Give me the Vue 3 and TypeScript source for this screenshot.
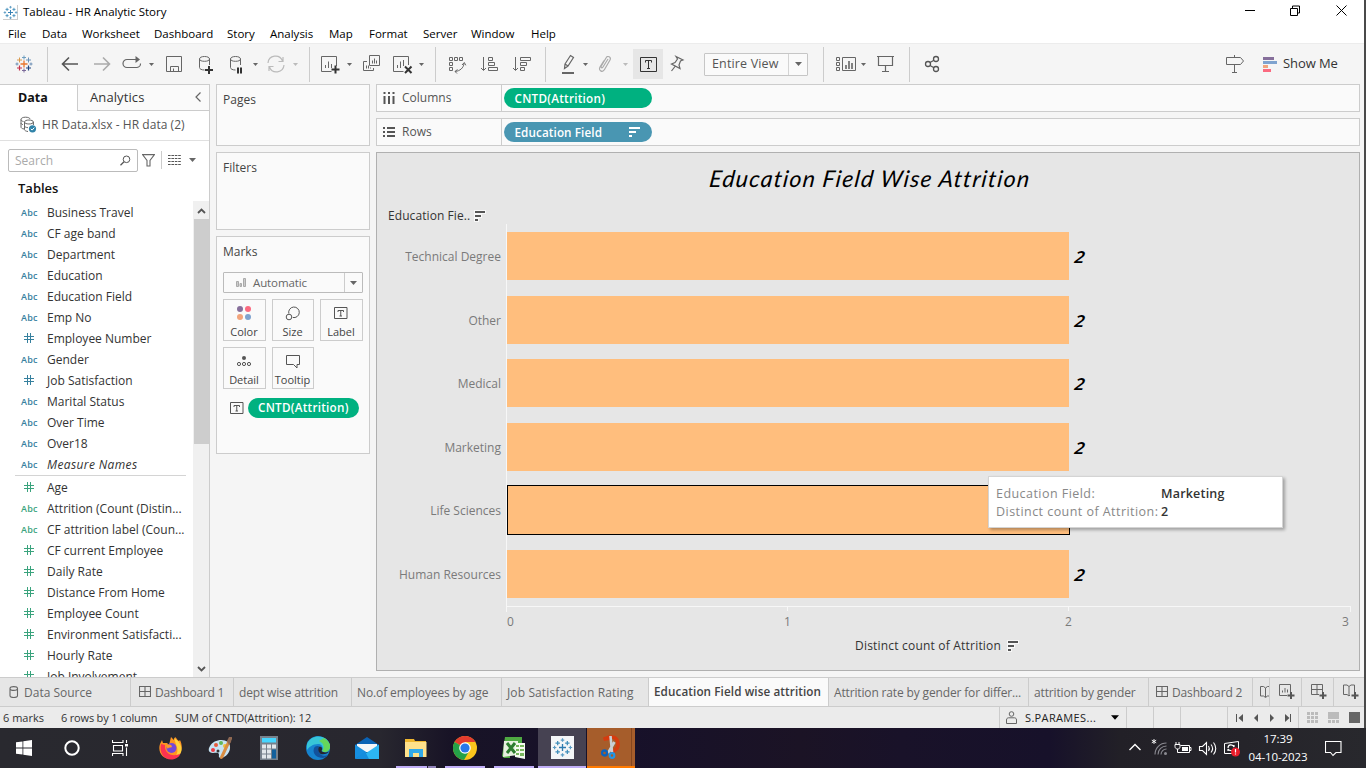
<script setup lang="ts">
interface Field { kind: 'abc' | 'num'; name: string; italic?: boolean }
interface Bar { name: string; value: number; selected?: boolean }
interface Tab { id: string; label: string; icon?: string; active?: boolean }

const menus: string[] = ['File', 'Data', 'Worksheet', 'Dashboard', 'Story', 'Analysis', 'Map', 'Format', 'Server', 'Window', 'Help']

const dimensions: Field[] = [
  { kind: 'abc', name: 'Business Travel' },
  { kind: 'abc', name: 'CF age band' },
  { kind: 'abc', name: 'Department' },
  { kind: 'abc', name: 'Education' },
  { kind: 'abc', name: 'Education Field' },
  { kind: 'abc', name: 'Emp No' },
  { kind: 'num', name: 'Employee Number' },
  { kind: 'abc', name: 'Gender' },
  { kind: 'num', name: 'Job Satisfaction' },
  { kind: 'abc', name: 'Marital Status' },
  { kind: 'abc', name: 'Over Time' },
  { kind: 'abc', name: 'Over18' },
  { kind: 'abc', name: 'Measure Names', italic: true },
]

const measures: Field[] = [
  { kind: 'num', name: 'Age' },
  { kind: 'abc', name: 'Attrition (Count (Distin...' },
  { kind: 'abc', name: 'CF attrition label (Coun...' },
  { kind: 'num', name: 'CF current Employee' },
  { kind: 'num', name: 'Daily Rate' },
  { kind: 'num', name: 'Distance From Home' },
  { kind: 'num', name: 'Employee Count' },
  { kind: 'num', name: 'Environment Satisfacti...' },
  { kind: 'num', name: 'Hourly Rate' },
  { kind: 'num', name: 'Job Involvement' },
]

const bars: Bar[] = [
  { name: 'Technical Degree', value: 2 },
  { name: 'Other', value: 2 },
  { name: 'Medical', value: 2 },
  { name: 'Marketing', value: 2 },
  { name: 'Life Sciences', value: 2, selected: true },
  { name: 'Human Resources', value: 2 },
]
const unitWidth = 281

const tabs: Tab[] = [
  { id: 'source', label: 'Data Source', icon: 'i-cyl' },
  { id: 'dash1', label: 'Dashboard 1', icon: 'i-grid' },
  { id: 'dept', label: 'dept wise attrition' },
  { id: 'age', label: 'No.of employees by age' },
  { id: 'job', label: 'Job Satisfaction Rating' },
  { id: 'edu', label: 'Education Field wise attrition', active: true },
  { id: 'rate', label: 'Attrition rate by gender for differ...' },
  { id: 'gender', label: 'attrition by gender' },
  { id: 'dash2', label: 'Dashboard 2', icon: 'i-grid' },
]
</script>

<template>
  <div class="screen">
    <svg class="defs" width="0" height="0">
      <symbol id="i-spark" viewBox="0 0 24 24">
        <path d="M12 8.5v7M8.500 12h7" stroke="#e8762c" stroke-width="1.300" />
        <path d="M7.500 5.500v5M5 8h5" stroke="#d99a4e" />
        <path d="M16.500 5.500v5M14 8h5" stroke="#6d93b8" />
        <path d="M7.500 13.500v5M5 16h5" stroke="#c4314b" stroke-width="1.200" />
        <path d="M16.500 13.500v5M14 16h5" stroke="#1f447e" stroke-width="1.200" />
        <path d="M12 3.500v4M10 5.500h4" stroke="#6f9fc0" />
        <path d="M12 16.500v4M10 18.500h4" stroke="#7b6a9a" />
        <path d="M5 10.500v3M3.500 12h3M19 10.500v3M17.500 12h3" stroke="#6d8fb5" />
      </symbol>
      <symbol id="i-sparkblue" viewBox="0 0 24 24">
        <path d="M12 8v8M8 12h8" stroke="#2e7bb0" stroke-width="1.500" />
        <path d="M6.500 4.500v5M4 7h5M17.500 4.500v5M15 7h5M6.500 14.500v5M4 17h5M17.500 14.500v5M15 17h5" stroke="#3f8dba" stroke-width="1.400" />
        <path d="M12 1.500v4M10 3.500h4M12 18.500v4M10 20.500h4M3 10v4M1 12h4M21 10v4M19 12h4" stroke="#5b9cc4" stroke-width="1.400" />
      </symbol>
      <symbol id="i-cyl" viewBox="0 0 10 12">
        <path d="M1 2.500v7c0 1.300 1.600 2 3.700 2s3.800-.7 3.800-2v-7M1 2.500C1 1.300 2.600.6 4.700.6s3.800.7 3.800 1.900-1.700 1.900-3.800 1.900S1 3.700 1 2.500z" fill="none" stroke="#666" stroke-width="1.100" />
      </symbol>
      <symbol id="i-grid" viewBox="0 0 12 12">
        <path d="M.5.5h11v10H.5zM6 .5v10M.5 5.500H11.500" fill="none" stroke="#666" stroke-width="1.100" />
      </symbol>
      <symbol id="i-caret" viewBox="0 0 7 4"><path d="M0 0h7L3.500 4z" /></symbol>
      <symbol id="i-hash" viewBox="0 0 12 12">
        <path d="M4.500 1v10M7.500 1v10M1 4.500h10M1 7.500h10" fill="none" stroke="currentColor" stroke-width="1" />
      </symbol>
      <symbol id="i-text" viewBox="0 0 14 12">
        <path d="M.5.5h12.500v11H.5z" fill="none" stroke="#555" />
        <path d="M4 5V3.500h5.500V5M6.750 3.500V9M5.500 9h2.500" fill="none" stroke="#555" />
      </symbol>
      <symbol id="i-sort" viewBox="0 0 12 12">
        <path d="M0 0h12v4H8v4H5v4H0z" fill="#f7f7f7" />
        <path d="M1 2h10M1 6h6M1 10h3" stroke="#555" stroke-width="2" />
      </symbol>
      <symbol id="i-book" viewBox="0 0 12 13">
        <path d="M.5 1.500l3 0 2 1.500 2-1.500h3.500v9.500H7.500l-2 1.500-2-1.500h-3zM5.500 3v9" fill="none" stroke="#666" />
      </symbol>
    </svg>

    <header class="titlebar">
      <span class="appicon"><svg width="15" height="15"><use href="#i-sparkblue" /></svg></span>
      <span class="apptitle">Tableau - HR Analytic Story</span>
      <svg class="winctl" width="104" height="14" viewBox="0 0 104 14">
        <path d="M0 6.500h10M45.500 4.500h7v7h-7zM47.500 4v-2h7v7h-2M91.500 1.500l10 10M101.500 1.500l-10 10" fill="none" stroke="#000" />
      </svg>
    </header>

    <nav class="menubar">
      <span v-for="m in menus" :key="m" :class="'m-' + m.toLowerCase()">{{ m }}</span>
    </nav>

    <div class="toolbar">
      <svg class="t s12"><use href="#i-spark" /></svg>
      <i class="sep s11"></i>
      <svg class="t s10" viewBox="0 0 24 24"><path d="M20 12H5M11 5.500L4.500 12l6.500 6.500" stroke="#555" stroke-width="1.600" /></svg>
      <svg class="t s8" viewBox="0 0 24 24"><path d="M4 12h15M13 5.500l6.500 6.500-6.500 6.500" stroke="#aaa" stroke-width="1.600" /></svg>
      <svg class="t s6" viewBox="0 0 24 24"><path d="M8.500 7.500H7a4 4 0 0 0 0 8h10a3.800 3.800 0 0 0 3.500-4M8.500 7.500h9" stroke="#666" stroke-width="1.200" /><path d="M15.500 4v7L20 7.500z" fill="#666" /></svg>
      <svg class="c s5"><use href="#i-caret" /></svg>
      <svg class="t s6" viewBox="0 0 24 24"><path d="M4.500 4.500h15v15h-15zM8.500 19v-4.500h8V19M11.500 19v-2.500" stroke="#666" /></svg>
      <svg class="t s8" viewBox="0 0 24 24"><path d="M5.500 7v8.500c0 1.500 2 2.500 5 2.500M15.500 7v6M5.500 7c0-1.500 2-2.500 5-2.500s5 1 5 2.500-2 2.300-5 2.300-5-.8-5-2.300z" stroke="#666" /><path d="M15 14v8M11 18h8" stroke="#333" stroke-width="2" /></svg>
      <svg class="t s6" viewBox="0 0 24 24"><path d="M6.500 7v8.500c0 1.500 2 2.500 5 2.500M16.500 7v6M6.500 7c0-1.500 2-2.500 5-2.500s5 1 5 2.500-2 2.300-5 2.300-5-.8-5-2.300z" stroke="#666" /><path d="M14 15.500v6M17 15.500v6" stroke="#333" stroke-width="2" /></svg>
      <svg class="c s5"><use href="#i-caret" /></svg>
      <svg class="t s4" viewBox="0 0 24 24"><path d="M4 11A7.500 7.500 0 0 1 18.500 9M20 13A7.500 7.500 0 0 1 5.500 15M19 5v4.500h-4.500M5 19v-4.500h4.500" stroke="#bbb" stroke-width="1.200" /></svg>
      <svg class="c s5 dim"><use href="#i-caret" /></svg>
      <i class="sep s9"></i>
      <svg class="t s8" viewBox="0 0 24 24"><path d="M13.500 19.500h-10v-15h15V14M7.500 16v-3M10.500 16V9.500M13.500 16v-4" stroke="#666" /><path d="M17.500 13.500v8M13.500 17.500h8" stroke="#333" stroke-width="2" /></svg>
      <svg class="c s5"><use href="#i-caret" /></svg>
      <svg class="t s6" viewBox="0 0 24 24"><path d="M9.500 3.500h10v10h-10zM12.500 11.500v-3M14.500 11.500v-5M16.500 11.500v-3M7 9.500H3.500v9h10V16M6.500 16.500v-3M8.500 16.500v-3M10.500 16.500v-1" stroke="#666" /></svg>
      <svg class="t s7" viewBox="0 0 24 24"><path d="M12.500 19.500h-10v-15h15V13M6.500 16v-3M9.500 16V9.500M12.500 14v-6" stroke="#666" /><path d="M14 14.500l6.500 6.500M20.500 14.500L14 21" stroke="#333" stroke-width="2" /></svg>
      <svg class="c s4"><use href="#i-caret" /></svg>
      <i class="sep s9"></i>
      <svg class="t s9" viewBox="0 0 24 24"><path d="M4.500 5.500h3v3h-3zM9.500 5.500h3v3h-3zM14.500 5.500h3v3h-3zM4.500 10.500h3v3h-3zM4.500 15.500h3v3h-3z M10 19.500c5-.5 8.500-3.500 9-8M17 13l2.300-2.500 1.500 2.800M12.500 17.500L10 19.500l2 2" stroke="#666" /></svg>
      <svg class="t s9" viewBox="0 0 24 24"><path d="M5.500 5v13M3 16l2.500 2.500L8 16M10.500 5.500h4v3h-4zM10.500 10.500h6v3h-6zM10.500 15.500h9v3h-9z" stroke="#666" /></svg>
      <svg class="t s8" viewBox="0 0 24 24"><path d="M5.500 5v13M3 16l2.500 2.500L8 16M10.500 5.500h10v3h-10zM10.500 10.500h6v3h-6zM10.500 15.500h4v3h-4z" stroke="#666" /></svg>
      <i class="sep s11"></i>
      <svg class="t s10" viewBox="0 0 24 24"><path d="M9 12l5.500-8.500 3 2L12 14l-3.500 2.500zM9 12l3 2" stroke="#666" stroke-width="1.200" /><path d="M6 21h12" stroke="#666" stroke-width="2" /></svg>
      <svg class="c s2 nudge"><use href="#i-caret" /></svg>
      <svg class="t s4" viewBox="0 0 24 24"><path d="M15 7l-5 8c-.8 1.500-2.500.5-1.800-.8L13 6c1.500-3 5.500-1 4 2l-5.500 9.500c-2 3.500-6.500 1-4.500-2.500L11 8.500" stroke="#aaa" stroke-width="1.200" /></svg>
      <svg class="c s5 dim nudge"><use href="#i-caret" /></svg>
      <span class="ttog s4"><svg width="17" height="15" viewBox="0 0 17 15"><path d="M.5.500h16v14H.5z" fill="none" stroke="#333" /><path d="M5.500 5.500v-2h6v2M8.500 3.500v8M7 11.500h3" fill="none" stroke="#333" /></svg></span>
      <svg class="t s2" viewBox="0 0 24 24"><path d="M11 4.500l7 3.500-2.500 1-1.500 4 1 3.500-8.500-4.500 3.500-1.500L12.500 7zM10 14.500L6.500 19" stroke="#666" stroke-width="1.200" /></svg>
      <span class="fit s15"><b>Entire View</b><span class="cbtn"><svg class="c"><use href="#i-caret" /></svg></span></span>
      <i class="sep s15"></i>
      <svg class="t s10" viewBox="0 0 24 24"><path d="M2.500 5.500h3v3h-3zM2.500 10.500h3v3h-3zM2.500 15.500h3v3h-3zM8.500 5.500h13v13h-13z" stroke="#666" /><path d="M12 17v-4M15 17V9M18 17v-6" stroke="#666" stroke-width="1.600" /></svg>
      <svg class="c s2 nudge"><use href="#i-caret" /></svg>
      <svg class="t s6" viewBox="0 0 24 24"><path d="M4 4.500h17M5.500 5v8.500h14V5M12.500 13.500v6M9 19.500h7" stroke="#666" stroke-width="1.200" /></svg>
      <i class="sep s12"></i>
      <svg class="t s10" viewBox="0 0 24 24"><circle cx="8" cy="12" r="2.500" stroke="#555" stroke-width="1.300" /><circle cx="16" cy="7" r="2.500" stroke="#555" stroke-width="1.300" /><circle cx="16" cy="17" r="2.500" stroke="#555" stroke-width="1.300" /><path d="M10 10.500l4-2.300M10 13.500l4 2.300" stroke="#555" stroke-width="1.200" /></svg>
      <span class="grow"></span>
      <svg class="t" viewBox="0 0 24 24"><path d="M4.500 5.500h14l3 3.500-3 3.500h-14zM12.500 3v2M12.500 13v7.500M10 20.500h5" stroke="#666" /></svg>
      <svg class="smicon" width="14" height="15" viewBox="0 0 14 15"><path d="M0 0h11v3H0z" fill="#866f9b" /><path d="M0 4h14v3H0z" fill="#7fa3cf" /><path d="M0 8h5v3H0z" fill="#f2a47c" /><path d="M0 12h8v3H0z" fill="#fb6a80" /></svg>
      <span class="showme">Show Me</span>
    </div>

    <main class="work">
      <aside class="data">
        <div class="dtabs">
          <span class="dtab on">Data</span>
          <span class="dtab off"><em>Analytics</em><svg width="7" height="10" viewBox="0 0 7 10"><path d="M5.500 .5L1 5l4.500 4.500" fill="none" stroke="#666" stroke-width="1.200" /></svg></span>
        </div>
        <div class="source">
          <svg width="17" height="17" viewBox="0 0 17 17"><path d="M4 13c-2-.3-3-1-3-2V3.500M1 3.500C1 2 3 1.200 5.500 1.200S10 2 10 3M1 3.500c0 1 .8 1.700 2.500 2M1 7c0 .8.8 1.400 2 1.600M4.500 6v7.500c0 1 1.500 1.800 3.500 2M4.500 6c0-1.200 2-2 4.400-2s4.500.8 4.500 2-2 2-4.500 2-4.400-.8-4.400-2zM13.400 6v3M4.500 10c0 .8 1.400 1.500 3.500 1.700" fill="none" stroke="#666" /><circle cx="12.500" cy="12.800" r="3.600" fill="#2f82a8" /><path d="M10.800 12.800l1.300 1.300 2.200-2.500" fill="none" stroke="#fff" /></svg>
          <span>HR Data.xlsx - HR data (2)</span>
        </div>
        <div class="searchrow">
          <div class="search"><span>Search</span><svg width="11" height="11" viewBox="0 0 11 11"><circle cx="6.500" cy="4.300" r="3.300" fill="none" stroke="#555" /><path d="M4 6.700L.5 10.300" stroke="#555" stroke-width="1.300" /></svg></div>
          <svg class="funnel" width="13" height="13" viewBox="0 0 13 13"><path d="M.5.600h12L8 6.500V12H5V6.500z" fill="none" stroke="#666" stroke-width="1.100" /></svg>
          <i></i>
          <svg width="13" height="10" viewBox="0 0 13 10"><path d="M0 .500h13M0 3.500h13M0 6.500h13M0 9.500h13" stroke="#555" stroke-dasharray="2.600 .8" /></svg>
          <svg class="c"><use href="#i-caret" /></svg>
        </div>
        <h2>Tables</h2>
        <div class="fieldarea">
          <div class="fields">
            <div v-for="f in dimensions" :key="f.name" class="field dim-f">
              <svg v-if="f.kind === 'num'" width="12" height="12"><use href="#i-hash" /></svg>
              <b v-else>Abc</b>
              <span :class="{ ital: f.italic }">{{ f.name }}</span>
            </div>
            <hr>
            <div v-for="f in measures" :key="f.name" class="field mea-f">
              <svg v-if="f.kind === 'num'" width="12" height="12"><use href="#i-hash" /></svg>
              <b v-else>Abc</b>
              <span>{{ f.name }}</span>
            </div>
          </div>
          <div class="scroll">
            <svg width="9" height="6" viewBox="0 0 9 6"><path d="M1 5l3.500-3.500L8 5" fill="none" stroke="#555" stroke-width="1.800" /></svg>
            <div class="thumb"></div>
            <svg class="down" width="9" height="6" viewBox="0 0 9 6"><path d="M1 1l3.500 3.500L8 1" fill="none" stroke="#555" stroke-width="1.800" /></svg>
          </div>
        </div>
      </aside>

      <section class="cards">
        <div class="card pages">Pages</div>
        <div class="card filters">Filters</div>
        <div class="card marks">
          <span class="mtitle">Marks</span>
          <div class="mtype">
            <svg width="10" height="10" viewBox="0 0 10 10"><path d="M.5 3.500h2v5h-2zM4 5.500h1.500v3H4zM7.500.500h2v8h-2z" fill="#ccc" stroke="#aaa" /></svg>
            <span>Automatic</span>
            <i><svg class="c"><use href="#i-caret" /></svg></i>
          </div>
          <div class="mbtns">
            <div class="mbtn"><svg width="16" height="16" viewBox="0 0 16 16"><circle cx="4" cy="4" r="3" fill="#866f9b" /><circle cx="12" cy="4" r="3" fill="#fb6a80" /><circle cx="4" cy="12" r="3" fill="#f2a47c" /><circle cx="12" cy="12" r="3" fill="#7fa3cf" /></svg><span>Color</span></div>
            <div class="mbtn"><svg width="16" height="16" viewBox="0 0 16 16"><path d="M3.800 8.500a5.300 5.300 0 1 1 4 4" fill="none" stroke="#555" /><circle cx="4" cy="12" r="2.800" fill="none" stroke="#555" /></svg><span>Size</span></div>
            <div class="mbtn"><svg width="14" height="16" viewBox="0 -2 14 16"><use href="#i-text" width="14" height="12" /></svg><span>Label</span></div>
            <div class="mbtn"><svg width="16" height="16" viewBox="0 0 16 16"><circle cx="8" cy="5" r="2" fill="#555" /><g fill="none" stroke="#555"><circle cx="3" cy="11" r="1.600" /><circle cx="8" cy="11" r="1.600" /><circle cx="13" cy="11" r="1.600" /></g></svg><span>Detail</span></div>
            <div class="mbtn"><svg width="16" height="16" viewBox="0 0 16 16"><path d="M1.500 2.500h13v9h-2.500V15l-3.500-3.500h-7z" fill="none" stroke="#555" /></svg><span>Tooltip</span></div>
          </div>
          <div class="mpill"><svg width="14" height="12"><use href="#i-text" /></svg><span class="pill green">CNTD(Attrition)</span></div>
        </div>
      </section>

      <section class="sheet">
        <div class="shelf">
          <span class="slabel"><svg width="12" height="12" viewBox="0 0 12 12"><path d="M1.500 0v2M1.500 4v8M6 0v2M6 4v8M10.500 0v2M10.500 4v8" stroke="#555" stroke-width="2" /></svg>Columns</span>
          <span class="pill green wide">CNTD(Attrition)</span>
        </div>
        <div class="shelf">
          <span class="slabel"><svg width="12" height="12" viewBox="0 0 12 12"><path d="M0 2h2M4 2h8M0 6h2M4 6h8M0 10h2M4 10h8" stroke="#555" stroke-width="1.800" /></svg>Rows</span>
          <span class="pill blue wide">Education Field<svg width="11" height="10" viewBox="0 0 11 10"><path d="M0 1h11M0 5h7M0 9h3" stroke="#fff" stroke-width="2" /></svg></span>
        </div>
        <div class="view">
          <h1>Education Field Wise Attrition</h1>
          <div class="rowhead"><span>Education Fie..</span><svg width="12" height="12"><use href="#i-sort" /></svg></div>
          <div class="plot">
            <div v-for="b in bars" :key="b.name" class="band">
              <span class="cat">{{ b.name }}</span>
              <div class="lane">
                <div class="bar" :class="{ sel: b.selected }" :style="{ width: b.value * unitWidth + 'px' }"></div>
                <strong v-if="!b.selected">{{ b.value }}</strong>
              </div>
            </div>
          </div>
          <div class="axis"><i></i><i></i><i></i></div>
          <div class="ticks"><span>0</span><span>1</span><span>2</span><span>3</span></div>
          <div class="axtitle"><span>Distinct count of Attrition</span><svg width="12" height="12"><use href="#i-sort" /></svg></div>
          <div class="tip">
            <span>Education Field:</span><b>Marketing</b>
            <span>Distinct count of Attrition:</span><b>2</b>
          </div>
        </div>
      </section>
    </main>

    <div class="tabs">
      <div v-for="t in tabs" :key="t.id" class="tab" :class="['w-' + t.id, { active: t.active }]">
        <svg v-if="t.icon" width="12" height="12"><use :href="'#' + t.icon" /></svg>
        <span>{{ t.label }}</span>
      </div>
      <div class="tab cut"><svg width="12" height="13"><use href="#i-book" /></svg></div>
      <div class="tab add"><svg width="16" height="16" viewBox="0 0 16 16"><path d="M8 11.500H.500v-11h11V8M3.500 8.500v-2M6 8.500V4M8.500 8.500v-3" fill="none" stroke="#666" /><path d="M12 8v7M8.500 11.500h7" stroke="#555" stroke-width="2" /></svg></div>
      <div class="tab add"><svg width="16" height="16" viewBox="0 0 16 16"><path d="M8 10.500H.500V.500h11V8M6 .500v10M.500 5.500h11" fill="none" stroke="#666" /><path d="M12 8v7M8.500 11.500h7" stroke="#555" stroke-width="2" /></svg></div>
      <div class="tab add last"><svg width="16" height="16" viewBox="0 0 16 16"><path d="M7 11l-1 1-2-1.500H.500V1h3.500l2 1.500L8 1h3.500v7M6 2.500v9" fill="none" stroke="#666" /><path d="M12 8v7M8.500 11.500h7" stroke="#555" stroke-width="2" /></svg></div>
    </div>

    <div class="status">
      <span class="st1">6 marks</span><span class="st2">6 rows by 1 column</span><span class="st3">SUM of CNTD(Attrition): 12</span>
      <span class="grow"></span>
      <div class="user"><svg width="11" height="13" viewBox="0 0 11 13"><circle cx="5.500" cy="3" r="2.300" fill="none" stroke="#666" /><path d="M.500 12.500V9c0-1.500 1-2.200 2-2.200h6c1 0 2 .7 2 2.200v3.500z" fill="none" stroke="#666" /></svg><span>S.PARAMES...</span><svg class="c"><use href="#i-caret" /></svg></div>
      <i class="g27"></i><i class="g27"></i><i class="g47"></i>
      <div class="pager"><svg width="56" height="8" viewBox="0 0 56 8"><path d="M.5 0v8" stroke="#555" /><path d="M7 0v8L2.500 4zM22 0v8l-4-4zM34 0v8l4-4zM49 0v8l4.500-4z" fill="#555" /><path d="M54.500 0v8" stroke="#555" /></svg></div>
      <div class="modes"><svg width="54" height="11" viewBox="0 0 54 11"><path d="M0 1.500h3M4 1.500h3M8 1.500h3M0 5.500h3M4 5.500h3M8 5.500h3M0 9.500h3M4 9.500h3M8 9.500h3M21 9.500h3M25 9.500h3M29 9.500h3" stroke="#bbb" stroke-width="3" /><path d="M21 0h11v7H21z" fill="#bbb" /><path d="M42 0h11v11H42z" fill="#666" /></svg></div>
    </div>

    <footer class="taskbar">
      <div class="sys"><svg width="16" height="16" viewBox="0 0 16 16"><path d="M0 2.300l6.500-.9v6.100H0zM7.300 1.300L16 0v7.500H7.300zM0 8.400h6.500v6.200L0 13.700zM7.300 8.400H16V16l-8.700-1.200z" fill="#fff" /></svg></div>
      <div class="sys"><svg width="16" height="16" viewBox="0 0 16 16"><circle cx="8" cy="8" r="6.700" fill="none" stroke="#fff" stroke-width="2" /></svg></div>
      <div class="sys"><svg width="16" height="16" viewBox="0 0 16 16"><path d="M.5 0v2.500h10.500V0M1.500 5.500h9v5.500h-9zM.5 16v-2.500h10.500V16M14.500 0v3M14.500 7.500V16" fill="none" stroke="#fff" stroke-width="1.100" /><path d="M13 4h3v2.500h-3z" fill="#fff" /></svg></div>
      <div class="app first"><svg width="24" height="24" viewBox="0 0 24 24"><path d="M12 1l3 3 1-3c2 1.500 2 3 4 4l1-1c2.500 5 2.500 11-1 15-4.500 5-12 5-16.500 1C.5 17-.5 12 1 8l2-4 1 3h4l2 2z" fill="#ff9422" /><path d="M15 2c4 2 8 7 7.500 12-.5 5-5 8.500-10 9 6-3 7-8 5-13z" fill="#ffd23c" /><path d="M2 8c-2 9 3 15.500 10 15.500 5 0 8-2.500 9.500-6C13 22 5 17 6 9z" fill="#fb3350" /><circle cx="12.500" cy="12" r="5" fill="#7447d9" /><path d="M7 10c3-3 6-1 6 1-2 1-4 0-4 2" fill="#ff9a27" /></svg></div>
      <div class="app"><svg width="24" height="24" viewBox="0 0 24 24"><path d="M2 10c3-6 13-8 18-4 4 4 2 12-4 15-3 2-6 1-5-2 0-3-3-2-6-2-5 0-5-4-3-7z" fill="#c7e3f3" /><circle cx="8" cy="9" r="2" fill="#e55b3c" /><circle cx="13" cy="7" r="2" fill="#62b85a" /><circle cx="5" cy="14" r="2" fill="#ee3c45" /><circle cx="17" cy="10" r="2" fill="#efc132" /><circle cx="10" cy="15" r="1.500" fill="#333" /><path d="M20 4l3-3 1 1-2 5-7 15c-2 2-3 1-3-1z" fill="#d98d42" /><path d="M19 5l2-4 3 0-1 5-2 3z" fill="#8d6854" /></svg></div>
      <div class="app"><svg width="18" height="24" viewBox="0 0 18 24"><path d="M0 0h18v24H0z" fill="#77818c" /><path d="M2 2h14v4.500H2z" fill="#45d5ff" /><path d="M2 8.500h4v4H2zM7 8.500h4v4H7zM12 8.500h4v4h-4zM2 13.500h4v4H2zM7 13.500h4v4H7zM2 18.500h4v4H2zM7 18.500h4v4H7z" fill="#e2e7eb" /><path d="M12 13.500h4v9h-4z" fill="#12609c" /></svg></div>
      <div class="app"><svg width="24" height="24" viewBox="0 0 24 24"><circle cx="12" cy="12" r="12" fill="#1683cf" /><path d="M1 8C5-2 21-2 24 9c.5 5-4 8-8 6 2-3 0-7-4-7-5 0-9 3-11 6z" fill="#37c5d7" /><path d="M18 2c5 3 8 8 5 12-2 3-6 2-7 1 3-3 2-8-3-10z" fill="#65d65b" /><path d="M8 12c-2 6 3 10 9 10 2-.3 4-1.500 5-3-4 2-9 0-9-4 0-2 1-3 1-4-2-2-5-1-6 1z" fill="#12529c" /><path d="M13 11c3-1 4 2 2.500 4 2 2 5 1.500 7.500.5-1 2-6 4-9 2-2-2-2-5-1-6.500z" fill="#25252f" /></svg></div>
      <div class="app"><svg width="24" height="22" viewBox="0 0 24 22"><path d="M0 8l12-8 12 8v4H0z" fill="#0a63b5" /><path d="M2 7h20v8H2z" fill="#f4f6f8" /><path d="M0 7.500l12 8L0 22z" fill="#168fe0" /><path d="M24 7.500V22H2z" fill="#2cb6f3" /><path d="M0 22l10-7.500 4 7.500z" fill="#148ddd" /></svg></div>
      <div class="app run split"><svg width="22" height="19" viewBox="0 0 22 19"><path d="M0 0h9l1 2h11v3H0z" fill="#f0b72f" /><path d="M0 3h21.500v15H0z" fill="#ffe18b" /><path d="M4 18v-8h14v8h-4v-4H8v4z" fill="#31a9e8" /></svg></div>
      <div class="app run"><svg width="24" height="24" viewBox="0 0 24 24"><circle cx="12" cy="12" r="12" fill="#fbc51c" /><path d="M12 12L1.600 6A12 12 0 0 1 22.400 6H12z" fill="#e33b2e" /><path d="M1.600 6A12 12 0 0 0 11 24l5.500-9.500L12 12z" fill="#24a148" /><circle cx="12" cy="12" r="5.800" fill="#fff" /><circle cx="12" cy="12" r="4.600" fill="#2878ea" /></svg></div>
      <div class="app run"><svg width="24" height="22" viewBox="0 0 24 22"><path d="M3 0h17v6H8v15H2L0 19z" fill="#4faa42" /><path d="M2 4h14v14L1 20z" fill="#e7f1df" /><path d="M13 6h10v16l-10-2z" fill="#f4fbef" /><path d="M14 8h3v2h-3zM18 8h4v2h-4zM14 12h3v2h-3zM18 12h4v2h-4zM14 16h3v2h-3zM18 16h4v3h-4z" fill="#78b65d" /><path d="M5 6l8 10M13 6L5 16" stroke="#2c7d2e" stroke-width="3" /></svg></div>
      <div class="app tabl"><svg width="23" height="23" viewBox="0 0 24 24"><path d="M0 0h24v24H0z" fill="#f4f6f8" /><use href="#i-sparkblue" x="1" y="1" width="22" height="22" /></svg></div>
      <div class="app snip"><svg width="20" height="24" viewBox="0 0 20 24"><path d="M8 2.500c6-2 9.500 2.500 9 7.500C16.500 15 12 17 9 15" fill="none" stroke="#d63b0f" stroke-width="3.600" /><path d="M2 2.500L9 0v5L3 6z" fill="#d63b0f" /><path d="M9.500 1l1.500 16M13.500 7L7 18" stroke="#c9ced3" stroke-width="2.600" /><circle cx="3.500" cy="18" r="2.500" fill="none" stroke="#0b63bd" stroke-width="2.300" /><circle cx="11" cy="20.500" r="2.300" fill="none" stroke="#2196e8" stroke-width="2.200" /></svg></div>
      <span class="grow"></span>
      <svg class="tray" width="112" height="20" viewBox="0 0 112 20" fill="none" stroke="#fff">
        <path d="M.5 12L6 6.500l5.500 5.500" stroke-width="1.400" />
        <path d="M25 1v5M22.800 2.200l4.400 2.600M27.200 2.200l-4.400 2.600" stroke-width=".9" />
        <path d="M26 16.500C26 10 31 5 37.500 5M29 16.500c0-5 4-8.500 8.500-8.500M32 16.500c0-3 2.500-5.500 5.500-5.500" stroke="#8b8b92" stroke-width="1.100" /><circle cx="36.500" cy="15.500" r="1.500" fill="#8b8b92" stroke="none" />
        <path d="M51.500 7.500h9v7h-9M60.500 9.500h1.500v3h-1.500M47 4v2M50 4v2M46 6.500h5v2c0 2-1 2.500-2.500 2.500S46 10 46 8.500zM48.500 11v3.500H52" /><path d="M53 9h6v4h-6z" fill="#fff" stroke="none" />
        <path d="M70.500 8.500h3l4-4v12l-4-4h-3zM79.500 8c1 1.500 1 3.500 0 5M82 6.500c2 2.500 2 5.500 0 8M84.500 4.500c3 3.500 3 8.500 0 12" stroke-width="1.100" />
        <path d="M95.500 5.500l14-2v12h-14z" /><path d="M99 10c0-4 5-4 6-1v-2M105 10c0 4-5 3-6 1v2" stroke-width="1.200" /><circle cx="106.500" cy="14" r="4.500" fill="#e81c2a" stroke="none" /><path d="M106.500 11v3.500M106.500 15.500v1" stroke-width="1.200" />
      </svg>
      <div class="clock"><span>17:39</span><span>04-10-2023</span></div>
      <svg class="note" width="17" height="17" viewBox="0 0 17 17"><path d="M.5 1.500h15.500v11H11l-3 3-2.500-3h-5z" fill="none" stroke="#fff" stroke-width="1.100" /></svg>
    </footer>
    <div class="edge"></div>
  </div>
</template>

<style>
body { margin: 0; overflow: hidden; }
</style>

<style scoped>
.screen { position: relative; width: 1366px; height: 768px; display: flex; flex-direction: column; background: #f5f5f5; color: #333; font: 12px "Open Sans", sans-serif; overflow: hidden; white-space: nowrap; }
.screen * { box-sizing: border-box; }
svg { display: block; flex: none; }
.defs { position: absolute; }
.edge { position: absolute; right: 0; top: 0; width: 2px; height: 728px; background: #4a4a4a; }
.grow { flex: 1; }
.c { width: 7px; height: 4px; fill: #666; }

.titlebar { height: 24px; background: #fff; display: flex; align-items: center; color: #000; }
.appicon { width: 15px; height: 15px; margin-left: 3px; border-right: 1px solid #ccc; border-bottom: 1px solid #ccc; display: flex; }
.apptitle { margin: -2px 0 0 5px; flex: 1; font-size: 11.500px; }
.winctl { margin: -3px 17px 0 0; }

.menubar { height: 19px; background: #fff; display: flex; line-height: 20px; color: #000; font-size: 11.500px; padding-left: 8px; }
.menubar span { flex: none; }
.m-file { width: 34px; } .m-data { width: 40px; } .m-worksheet { width: 72px; } .m-dashboard { width: 73px; } .m-story { width: 43px; } .m-analysis { width: 59px; } .m-map { width: 40px; } .m-format { width: 54px; } .m-server { width: 48px; } .m-window { width: 60px; }

.toolbar { height: 41px; border-top: 1px solid #ececec; display: flex; align-items: center; }
.t { width: 24px; height: 24px; fill: none; }
.sep { width: 1px; height: 35px; background: #ccc; }
.s2 { margin-left: 2px; } .s4 { margin-left: 4px; } .s5 { margin-left: 5px; } .s6 { margin-left: 6px; } .s7 { margin-left: 7px; } .s8 { margin-left: 8px; } .s9 { margin-left: 9px; } .s10 { margin-left: 10px; } .s11 { margin-left: 11px; } .s12 { margin-left: 12px; } .s15 { margin-left: 15px; }
.toolbar .c { width: 5px; height: 3px; margin-right: 2px; }
.nudge { transform: translateX(1px); }
.dim { fill: #bbb; }
.ttog { width: 30px; height: 30px; background: #e6e6e6; display: flex; align-items: center; justify-content: center; }
.fit { width: 104px; height: 23px; border: 1px solid #c6c6c6; background: #fafafa; display: flex; border-radius: 1px; }
.fit b { flex: 1; font-weight: 400; font-size: 12.500px; letter-spacing: .15px; line-height: 20px; padding-left: 7px; color: #555; }
.cbtn { width: 19px; border-left: 1px solid #d4d4d4; display: flex; align-items: center; justify-content: center; }
.toolbar .cbtn .c { width: 7px; height: 4px; margin: 0; }
.smicon { margin-left: 17px; }
.showme { width: 89px; padding-left: 6px; font-size: 13px; letter-spacing: -.08px; margin-top: -2px; }

.work { height: 593px; display: flex; }
.data { width: 210px; border-right: 1px solid #ccc; background: #fff; display: flex; flex-direction: column; overflow: hidden; }
.dtabs { height: 27px; display: flex; flex: none; font-size: 13px; line-height: 25px; }
.dtab.on { width: 77px; padding-left: 18px; border-top: 1px solid #ccc; font-weight: 700; font-size: 12.500px; color: #111; }
.dtab.off { flex: 1; border: 1px solid #ccc; border-right: 0; display: flex; align-items: center; padding-left: 12px; color: #333; background: #fafafa; letter-spacing: .1px; }
.dtab em { font-style: normal; flex: 1; }
.dtab svg { margin-right: 7px; margin-top: -2px; }
.source { height: 30px; flex: none; border-bottom: 1px solid #e0e0e0; display: flex; align-items: center; padding: 0 0 2px 20px; gap: 5px; color: #555; letter-spacing: .04px; }
.searchrow { height: 38px; flex: none; display: flex; align-items: center; padding-left: 8px; }
.search { width: 130px; height: 23px; margin-top: 1px; border: 1px solid #bbb; border-radius: 2px; display: flex; align-items: center; justify-content: space-between; padding: 0 6px; color: #aaa; font-size: 12px; }
.funnel { margin-left: 4px; }
.searchrow > i { width: 1px; height: 18px; background: #ccc; margin: 0 6px; }
.searchrow .c { margin-left: 8px; }
h2 { margin: 0; height: 22px; line-height: 19px; padding-left: 18px; font-size: 13px; color: #111; flex: none; font-weight: 600; }
.fieldarea { flex: 1; display: flex; min-height: 0; }
.fields { width: 193px; overflow: hidden; padding-top: 1px; }
.field { height: 21px; display: flex; align-items: center; padding-left: 21px; }
.field b { width: 26px; font-size: 9px; font-weight: 600; letter-spacing: .2px; }
.field svg { margin: -1px 12px 0 2px; }
.field span { color: #333; margin-top: -1px; }
.dim-f { color: #36809e; } .mea-f { color: #3aa37d; }
.ital { font-style: italic; letter-spacing: .38px; }
hr { margin: 0 0 1px 15px; width: 171px; border: 0; height: 1px; background: #d4d4d4; }
.scroll { width: 16px; background: #f0f0f0; display: flex; flex-direction: column; align-items: center; padding-top: 7px; }
.thumb { width: 15px; height: 225px; margin-top: 5px; background: #cdcdcd; }
.down { margin-top: auto; margin-bottom: 5px; }

.cards { width: 154px; margin-left: 6px; display: flex; flex-direction: column; gap: 6px; }
.card { border: 1px solid #ccc; background: #fafafa; padding: 6px; line-height: 18px; color: #444; font-size: 12px; }
.pages { height: 62px; } .filters { height: 78px; } .marks { height: 218px; }
.mtitle { display: block; height: 29px; }
.mtype { height: 21px; border: 1px solid #bbb; display: flex; align-items: center; padding-left: 12px; gap: 7px; color: #666; border-radius: 1px; font-size: 11.500px; }
.mtype span { flex: 1; letter-spacing: -.1px; }
.mtype i { width: 18px; height: 100%; border-left: 1px solid #ccc; display: flex; align-items: center; justify-content: center; }
.mbtns { margin-top: 6px; display: grid; grid-template-columns: 43px 42px 43px; gap: 6px; }
.mbtn { height: 42px; border: 1px solid #ccc; display: flex; flex-direction: column; align-items: center; padding-top: 5px; gap: 2px; font-size: 11px; }
.mbtn svg { margin-left: -1px; }
.mbtn span { line-height: 17px; margin-left: -1px; }
.mpill { display: flex; align-items: center; margin-top: 9px; padding-left: 7px; gap: 4px; }
.pill { height: 20px; border-radius: 10px; line-height: 19px; padding: 0 10px; color: #fff; font-weight: 600; font-size: 11.700px; letter-spacing: .25px; }
.mpill .pill { width: 111px; }
.green { background: #00b180; } .blue { background: #4996b2; }
.wide { width: 148px; margin-left: 2px; padding-left: 10.500px; display: flex; justify-content: space-between; align-items: center; }
.blue { letter-spacing: .1px; }
.blue svg { margin-right: 2px; }

.sheet { width: 984px; margin-left: 6px; display: flex; flex-direction: column; gap: 6px; }
.shelf { height: 28px; border: 1px solid #ccc; background: #fafafa; display: flex; align-items: center; }
.slabel { width: 125px; height: 100%; border-right: 1px solid #ccc; padding: 0 0 1px 6px; display: flex; align-items: center; gap: 7px; color: #555; }
.view { position: relative; height: 519px; border: 1px solid #b0b0b0; background: #e6e6e6; display: flex; flex-direction: column; }
h1 { margin: 0; height: 54px; text-align: center; color: #000; font: italic 400 23px/50px Lato, sans-serif; letter-spacing: 1.200px; padding-left: 4px; transform: skewX(-7deg); }
.rowhead { height: 17.200px; display: flex; align-items: center; padding-left: 11px; gap: 4px; font-size: 12px; letter-spacing: .08px; }
.plot { height: 381.600px; }
.band { height: 63.600px; display: flex; align-items: center; }
.cat { width: 124px; text-align: right; color: #7a7a7a; padding-top: 1px; }
.lane { margin-left: 5px; height: 100%; border-left: 1px solid #f7f7f7; display: flex; align-items: center; }
.bar { height: 48px; background: #ffbe7d; }
.bar.sel { height: 50px; border: 1px solid #000; max-width: none; padding-right: 1px; box-sizing: border-box; outline: 0; border-right: 0; box-shadow: 1px 0 0 #000; }
.lane strong { margin: 2px 0 0 6px; font: italic 600 18px "Noto Sans", sans-serif; color: #000; transform: skewX(-8deg) scaleY(.92); }
.axis { width: 845px; margin-left: 129px; height: 6px; flex: none; border: 1px solid #f7f7f7; border-bottom: 0; display: grid; grid-template-columns: 280px 281px 282px; }
.axis i + i { border-left: 1px solid #f7f7f7; height: 4px; }
.ticks { display: grid; grid-template-columns: 277px 281px 277px auto; margin-left: 130px; height: 19px; line-height: 19px; color: #7a7a7a; }
.axtitle { margin-top: 6px; height: 18px; display: flex; align-items: center; padding-left: 478px; gap: 6px; letter-spacing: .2px; }
.tip { position: absolute; left: 611px; top: 323px; width: 295px; height: 52px; background: #fff; border: 1px solid #d4d4d4; box-shadow: 2px 2px 3px rgba(0,0,0,.3); display: grid; grid-template-columns: 165px 1fr; grid-auto-rows: 18px; padding: 8px 7px; line-height: 18px; font-size: 12.500px; letter-spacing: .45px; color: #888; }
.tip b { color: #333; font-weight: 600; letter-spacing: .2px; }

.tabs { height: 30px; border-top: 1px solid #ccc; border-bottom: 1px solid #ccc; background: #e6e6e6; display: flex; color: #666; }
.tab { border-right: 1px solid #ccc; display: flex; align-items: center; flex: none; overflow: hidden; padding-left: 5px; gap: 4px; line-height: 28px; padding-top: 1px; }
.tab > svg { margin-top: -2px; }
.tab.active { background: #fafafa; font-weight: 600; color: #444; line-height: 26px; font-size: 11.700px; letter-spacing: .1px; padding: 0 0 2px 5px; }
.w-source { width: 131px; padding-left: 8px; } .w-dash1 { width: 103px; padding-left: 8px; letter-spacing: -.25px; } .w-dept { width: 118px; letter-spacing: -.15px; } .w-age { width: 150px; letter-spacing: -.12px; } .w-job { width: 147px; letter-spacing: .12px; } .w-edu { width: 180px; } .w-rate { width: 200px; letter-spacing: -.15px; } .w-gender { width: 120px; letter-spacing: -.14px; } .w-dash2 { width: 104px; padding-left: 7px; letter-spacing: -.15px; }
.cut { width: 17px; padding-left: 7px; } .add { width: 32px; padding-left: 9px; } .last { border: 0; }

.status { height: 21px; background: #ebebeb; display: flex; align-items: center; font-size: 11px; }
.st1 { width: 58px; padding-left: 3px; } .st2 { width: 114px; padding-left: 3px; letter-spacing: -.18px; } .st3 { padding-left: 3px; }
.user { width: 127px; height: 100%; border-left: 1px solid #ccc; display: flex; align-items: center; padding-left: 6px; color: #222; }
.user span { width: 86px; margin-left: 8px; letter-spacing: .35px; }
.user .c { fill: #000; width: 8px; height: 5px; }
.g27, .g47 { height: 100%; border-left: 1px solid #ccc; width: 27px; } .g47 { width: 47px; }
.pager { width: 71px; height: 100%; border-left: 1px solid #ccc; padding-left: 8px; display: flex; align-items: center; }
.modes { width: 68px; height: 100%; border-left: 1px solid #ccc; padding-left: 8px; display: flex; align-items: center; }

.taskbar { height: 40px; background: linear-gradient(90deg, #29292f 0, #28272f 380px, #181326 450px, #17112a 620px, #1b1325 800px, #191229 900px, #17112a 1050px, #222027 1120px, #28282d 1366px); display: flex; align-items: center; }
.sys { width: 48px; height: 40px; display: flex; align-items: center; justify-content: center; }
.app { width: 49px; height: 40px; display: flex; align-items: center; justify-content: center; flex: none; }
.first { margin-left: 2px; }
.run { background: linear-gradient(#c0aef7, #c0aef7) center bottom / 40px 2px no-repeat; }
.split { background: linear-gradient(90deg, #c0aef7 31px, #29242f 31px, #29242f 32px, #9082ba 32px) center bottom / 40px 2px no-repeat; }
.tabl { width: 48px; background: #464252; border-bottom: 2px solid #c0aef7; margin: 0 1px 0 0; }
.snip { width: 48px; background: linear-gradient(90deg, #a65d2b 44px, #84461e 44px, #84461e 45px, #a65d2b 45px); border-bottom: 2px solid #ff7a00; }
.tray { margin-right: 7px; }
.clock { width: 64px; display: flex; flex-direction: column; align-items: center; color: #fff; font-size: 11.500px; line-height: 18px; margin: -1px 2px 0 -2px; letter-spacing: -.1px; }
.note { margin: 0 24px 0 13px; }
</style>
